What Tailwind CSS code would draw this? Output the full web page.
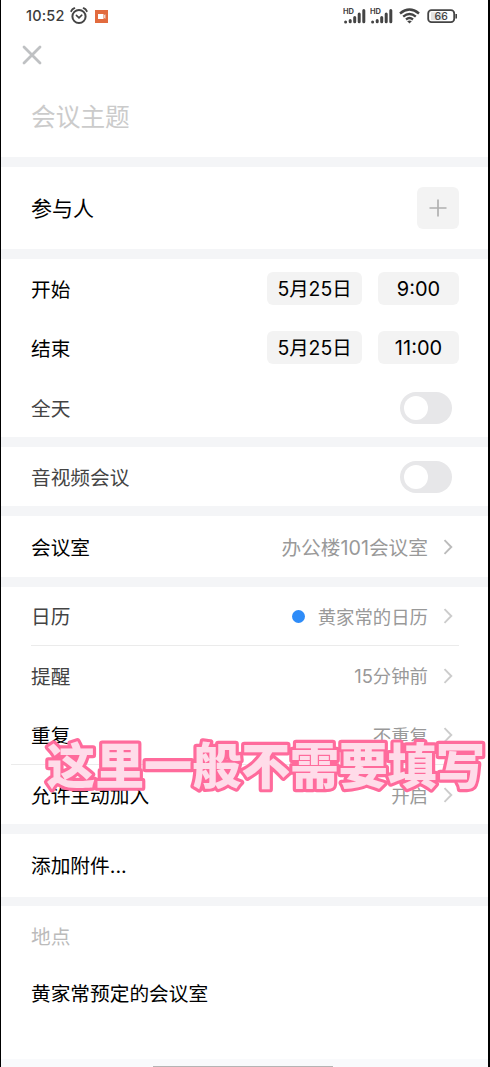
<!DOCTYPE html>
<html lang="zh-CN">
<head>
<meta charset="utf-8">
<title>会议</title>
<script src="https://cdn.jsdelivr.net/npm/@tailwindcss/browser@4"></script>
</head>
<body class="bg-white">
<svg class="hidden">
  <symbol id="chev" viewBox="0 0 10 16"><path d="M1.5 1.2 8.3 8 1.5 14.8" fill="none" stroke="currentColor" stroke-width="1.9"/></symbol>
  <symbol id="sig" viewBox="0 0 24 17">
    <text x="0" y="6.2" font-size="7.2" font-weight="700" textLength="11" lengthAdjust="spacingAndGlyphs" fill="#444">HD</text>
    <g stroke="#444" stroke-width="3" stroke-linecap="round"><path d="M2.6 13.900v0M7.200 13.700v-1.200M11.700 13.700v-4.200M16.200 13.700v-7.700M20.800 13.700V2.500"/></g>
  </symbol>
</svg>
<main class="relative flex h-[1067px] w-[490px] flex-col overflow-hidden border-l border-r-2 border-black bg-white text-[19.7px] leading-none text-black font-['Inter','Noto_Sans_CJK_SC',sans-serif]">
  <header class="flex h-8 shrink-0 items-center pl-[25px] pr-[30px] text-[#3c3c3c]">
    <span class="w-[42px] text-[14.5px] font-medium tracking-[0.2px]">10:52</span>
    <svg class="ml-0.5 size-[18px]" viewBox="0 0 18 18" fill="none" stroke="#444" stroke-linecap="round"><circle cx="9" cy="9.5" r="6.6" stroke-width="2"/><path d="M1.2 4.2Q2.2 2 4.4 1.2M16.8 4.2Q15.8 2 13.6 1.2" stroke-width="1.8"/><path d="M6.4 8.4 9 10.8 11.8 8.2" stroke-width="1.6"/></svg>
    <svg class="ml-[7px] size-[13px]" viewBox="0 0 13 13"><path fill="#e26b3e" d="M0 0h13v13H0z"/><path fill="#fff" d="M3 4h5.5v5H3z"/><path fill="#ecd6cc" d="M9 5l1.5-.8v4.6L9 8z"/></svg>
    <div class="ml-auto flex items-center">
      <svg class="h-[17px] w-6"><use href="#sig"/></svg>
      <svg class="ml-[3px] h-[17px] w-6"><use href="#sig"/></svg>
      <svg class="ml-[5px] h-4 w-[21px]" viewBox="0 0 21 16" fill="none" stroke="#444" stroke-width="2.4"><path d="M1 5.5Q10.500-2.300 20 5.500M4.200 8.600Q10.500 3.400 16.800 8.600M7 11.500Q10.500 8.700 14 11.500"/><path fill="#444" stroke="none" d="M8.200 13.200Q10.500 11.600 12.800 13.200L10.500 15.500z"/></svg>
      <svg class="ml-[7px] h-[15px] w-[31px]" viewBox="0 0 31 15"><rect x="1.200" y="1.200" width="26" height="12" rx="3.300" fill="#fff" stroke="#444" stroke-width="1.800"/><path d="M4 3.200h12v8H4z" fill="#e2e2e2"/><path d="M29.200 5v4.500" stroke="#444" stroke-width="1.600"/><text x="14.200" y="11" text-anchor="middle" font-size="10.500" font-weight="500" fill="#444">66</text></svg>
    </div>
  </header>
  <div class="flex h-[45px] shrink-0 items-center pl-[21px]">
    <svg class="size-5" viewBox="0 0 20 20"><path d="M2 2l16 16M18 2 2 18" stroke="#bfc1c3" stroke-width="2.800" stroke-linecap="round"/></svg>
  </div>
  <div class="flex h-20 shrink-0 items-center pl-[30px] text-[24.700px] text-[#cbcbcb]">会议主题</div>
  <div class="h-2.5 shrink-0 bg-[#f4f5f7]"></div>
  <section class="flex h-[82px] shrink-0 items-center justify-between pl-[30px] pr-[29px]">
    <span class="pt-px text-[21px]">参与人</span>
    <div class="flex size-[42px] items-center justify-center rounded-md bg-[#f3f3f3]"><svg class="size-[18px]" viewBox="0 0 18 18"><path d="M.5 9h17M9 .5v17" stroke="#b0b0b0" stroke-width="1.700"/></svg></div>
  </section>
  <div class="h-2.5 shrink-0 bg-[#f4f5f7]"></div>
  <section class="flex h-[178px] shrink-0 flex-col pl-[30px] pr-[29px]">
    <div class="flex h-[59px] items-center gap-4">
      <span class="mr-auto pt-[5px]">开始</span>
      <div class="flex h-[33px] w-[95px] items-center justify-center rounded-md bg-[#f3f3f3] pt-0.5 text-[19.400px]">5月25日</div>
      <div class="flex h-[33px] w-[81px] items-center justify-center rounded-md bg-[#f3f3f3] text-[20px]">9:00</div>
    </div>
    <div class="flex h-[59px] items-center gap-4">
      <span class="mr-auto pt-[5px]">结束</span>
      <div class="flex h-[33px] w-[95px] items-center justify-center rounded-md bg-[#f3f3f3] pt-0.5 text-[19.400px]">5月25日</div>
      <div class="flex h-[33px] w-[81px] items-center justify-center rounded-md bg-[#f3f3f3] text-[20px]">11:00</div>
    </div>
    <div class="flex h-[60px] items-center justify-between pr-[7px] pt-px text-[#444]">
      <span class="pt-[4px]">全天</span><div class="flex h-8 w-[52px] items-center rounded-full bg-[#e7e7e9] pl-1"><div class="size-6 rounded-full bg-white"></div></div>
    </div>
  </section>
  <div class="h-2.5 shrink-0 bg-[#f4f5f7]"></div>
  <section class="flex h-[59px] shrink-0 items-center justify-between pl-[30px] pr-9 text-[#444]">
    <span class="pt-[5px]">音视频会议</span><div class="flex h-8 w-[52px] items-center rounded-full bg-[#e7e7e9] pl-1"><div class="size-6 rounded-full bg-white"></div></div>
  </section>
  <div class="h-2.5 shrink-0 bg-[#f4f5f7]"></div>
  <section class="flex h-[61px] shrink-0 items-center pl-[30px] pr-[35px]">
    <span class="mr-auto pt-[5px]">会议室</span><span class="pt-[5px] text-[#999]">办公楼101会议室</span><svg class="ml-[15px] h-4 w-2.5 text-[#bbb]"><use href="#chev"/></svg>
  </section>
  <div class="h-2.5 shrink-0 bg-[#f4f5f7]"></div>
  <section class="flex h-[237px] shrink-0 flex-col">
    <div class="ml-[30px] mr-[29px] flex h-[59px] items-center border-b border-[#ebebeb] pr-1.5 text-[#444]">
      <span class="mr-auto pt-[4px]">日历</span><span class="mr-[13px] size-[13px] rounded-full bg-[#2e8cf8]"></span><span class="pt-0.5 text-[18.400px] text-[#999]">黄家常的日历</span><svg class="ml-[15px] h-4 w-2.5 text-[#ccc]"><use href="#chev"/></svg>
    </div>
    <div class="flex h-[60px] items-center pl-[30px] pr-[35px] text-[#444]">
      <span class="mr-auto pt-[3px]">提醒</span><span class="pt-px text-[18.400px] text-[#999]">15分钟前</span><svg class="ml-[15px] h-4 w-2.5 text-[#ccc]"><use href="#chev"/></svg>
    </div>
    <div class="ml-[10px] mr-[29px] flex h-[59px] items-center border-b border-[#ebebeb] pl-5 pr-1.5">
      <span class="mr-auto pt-[3px]">重复</span><span class="pt-0.5 text-[18.400px] text-[#999]">不重复</span><svg class="ml-[15px] h-4 w-2.5 text-[#ccc]"><use href="#chev"/></svg>
    </div>
    <div class="flex h-[59px] items-center pl-[30px] pr-[35px]">
      <span class="mr-auto pt-[5px]">允许主动加入</span><span class="pt-[3px] text-[18.400px] text-[#999]">开启</span><svg class="ml-[15px] h-4 w-2.5 text-[#ccc]"><use href="#chev"/></svg>
    </div>
  </section>
  <div class="h-2.5 shrink-0 bg-[#f4f5f7]"></div>
  <section class="flex h-[63px] shrink-0 items-center pl-[30px] pt-[3px]">添加附件...</section>
  <div class="h-[9px] shrink-0 bg-[#f4f5f7]"></div>
  <section class="flex h-[153px] shrink-0 flex-col pl-[30px]">
    <div class="flex h-[60px] items-center pt-[3px] text-[#bbb]">地点</div>
    <div class="flex h-[54px] items-center pt-[3px]">黄家常预定的会议室</div>
  </section>
  <footer class="flex h-2 shrink-0 items-end justify-center bg-[#f9fafc] pr-1"><div class="h-px w-[180px] bg-[#b5b5b5]"></div></footer>
  <svg class="absolute left-0 top-[725px] h-20 w-[487px] overflow-visible font-['Noto_Sans_CJK_SC',sans-serif]" viewBox="1 725 487 80">
    <text y="784" x="46.500 95.200 143.900 192.600 241.300 290 338.700 387.400 436.100" font-size="49" font-weight="900" fill="#ffdce9" stroke="#ff6b9c" stroke-width="6.400" stroke-linejoin="round" paint-order="stroke">这里一般不需要填写</text>
  </svg>
</main>
</body>
</html>
